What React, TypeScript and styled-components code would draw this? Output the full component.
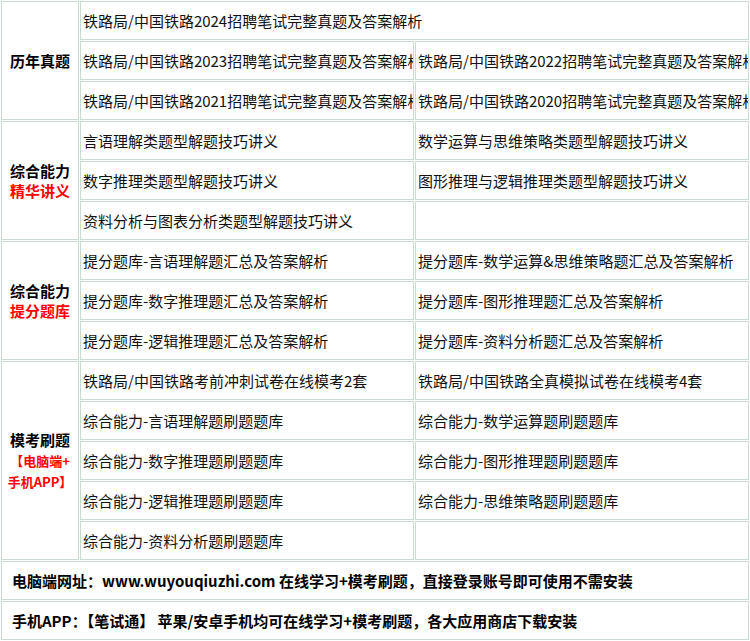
import React from "react";
import styled, { createGlobalStyle } from "styled-components";

const GlobalStyle = createGlobalStyle`
  html, body {
    margin: 0;
    padding: 0;
    background: #ffffff;
  }
  body {
    font-family: "Noto Sans CJK SC", "Noto Sans", sans-serif;
    color: #000;
  }
`;

const BORDER = "#c8ddd0";

const Table = styled.div`
  width: 750px;
  box-sizing: border-box;
  padding: 1px;
  display: flex;
  flex-direction: column;
  gap: 1px;
  background: #fff;
`;

const Section = styled.div`
  display: grid;
  grid-template-columns: 78px 1fr;
  gap: 1px;
`;

const Label = styled.div`
  box-sizing: border-box;
  border: 1px solid ${BORDER};
  display: flex;
  flex-direction: column;
  align-items: center;
  justify-content: center;
  text-align: center;
  font-weight: 700;
  font-size: 15px;
  line-height: 20px;
  color: #000;
`;

const LabelLine = styled.span<{ $red?: boolean; $small?: boolean }>`
  display: block;
  color: ${(p) => (p.$red ? "#ff0000" : "#000")};
  font-size: ${(p) => (p.$small ? "13px" : "15px")};
  line-height: ${(p) => (p.$small ? "21px" : "20px")};
  white-space: nowrap;
`;

const Items = styled.div`
  display: grid;
  grid-template-columns: 334px 334px;
  grid-auto-rows: 39px;
  gap: 1px;
`;

const Cell = styled.div<{ $wide?: boolean }>`
  box-sizing: border-box;
  border: 1px solid ${BORDER};
  grid-column: ${(p) => (p.$wide ? "1 / span 2" : "auto")};
  display: flex;
  align-items: center;
  padding: 0 0 0 2px;
  font-size: 15px;
  color: #111;
  white-space: nowrap;
  overflow: hidden;
`;

const FooterCell = styled.div`
  box-sizing: border-box;
  height: 39px;
  border: 1px solid ${BORDER};
  display: flex;
  align-items: center;
  padding-left: 10px;
  font-size: 15px;
  font-weight: 700;
  color: #000;
  white-space: nowrap;
  overflow: hidden;
`;

type SectionData = {
  label: { text: string; red?: boolean; small?: boolean }[];
  rows: (string | null)[][];
  wideFirst?: boolean;
};

const sections: SectionData[] = [
  {
    label: [{ text: "历年真题" }],
    wideFirst: true,
    rows: [
      ["铁路局/中国铁路2024招聘笔试完整真题及答案解析"],
      [
        "铁路局/中国铁路2023招聘笔试完整真题及答案解析",
        "铁路局/中国铁路2022招聘笔试完整真题及答案解析",
      ],
      [
        "铁路局/中国铁路2021招聘笔试完整真题及答案解析",
        "铁路局/中国铁路2020招聘笔试完整真题及答案解析",
      ],
    ],
  },
  {
    label: [{ text: "综合能力" }, { text: "精华讲义", red: true }],
    rows: [
      ["言语理解类题型解题技巧讲义", "数学运算与思维策略类题型解题技巧讲义"],
      ["数字推理类题型解题技巧讲义", "图形推理与逻辑推理类题型解题技巧讲义"],
      ["资料分析与图表分析类题型解题技巧讲义", null],
    ],
  },
  {
    label: [{ text: "综合能力" }, { text: "提分题库", red: true }],
    rows: [
      ["提分题库-言语理解题汇总及答案解析", "提分题库-数学运算&思维策略题汇总及答案解析"],
      ["提分题库-数字推理题汇总及答案解析", "提分题库-图形推理题汇总及答案解析"],
      ["提分题库-逻辑推理题汇总及答案解析", "提分题库-资料分析题汇总及答案解析"],
    ],
  },
  {
    label: [
      { text: "模考刷题" },
      { text: "【电脑端+", red: true, small: true },
      { text: "手机APP】", red: true, small: true },
    ],
    rows: [
      ["铁路局/中国铁路考前冲刺试卷在线模考2套", "铁路局/中国铁路全真模拟试卷在线模考4套"],
      ["综合能力-言语理解题刷题题库", "综合能力-数学运算题刷题题库"],
      ["综合能力-数字推理题刷题题库", "综合能力-图形推理题刷题题库"],
      ["综合能力-逻辑推理题刷题题库", "综合能力-思维策略题刷题题库"],
      ["综合能力-资料分析题刷题题库", null],
    ],
  },
];

export default function App() {
  return (
    <>
      <GlobalStyle />
      <Table>
        {sections.map((s, si) => (
          <Section key={si}>
            <Label>
              {s.label.map((l, li) => (
                <LabelLine key={li} $red={l.red} $small={l.small}>
                  {l.text}
                </LabelLine>
              ))}
            </Label>
            <Items>
              {s.rows.map((row, ri) =>
                row.length === 1 ? (
                  <Cell key={ri} $wide>
                    {row[0]}
                  </Cell>
                ) : (
                  row.map((c, ci) => <Cell key={`${ri}-${ci}`}>{c ?? ""}</Cell>)
                )
              )}
            </Items>
          </Section>
        ))}
        <FooterCell>
          电脑端网址：www.wuyouqiuzhi.com 在线学习+模考刷题，直接登录账号即可使用不需安装
        </FooterCell>
        <FooterCell>
          手机APP：【笔试通】 苹果/安卓手机均可在线学习+模考刷题，各大应用商店下载安装
        </FooterCell>
      </Table>
    </>
  );
}
